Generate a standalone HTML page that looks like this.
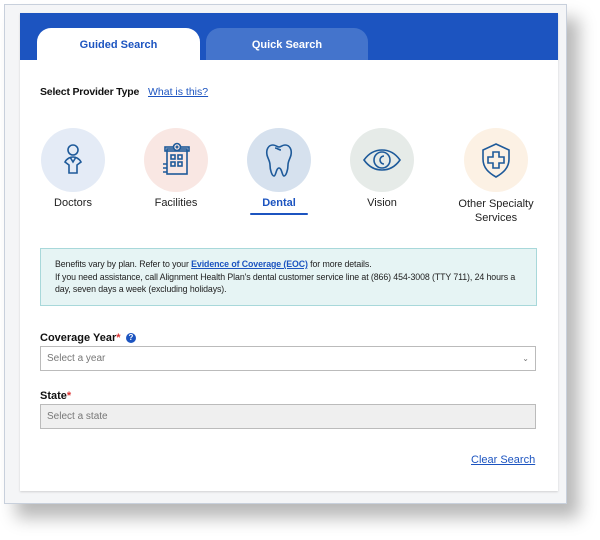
<!DOCTYPE html>
<html><head><style>
*{box-sizing:border-box;margin:0;padding:0}
body{width:600px;height:540px;background:#fff;font-family:"Liberation Sans",Arial,sans-serif;position:relative;overflow:hidden}
.frame{position:absolute;left:4px;top:4px;width:563px;height:500px;background:#f4f5f7;border:1px solid #c8d0dc;box-shadow:12px 14px 16px rgba(0,0,0,0.28)}
.card{position:absolute;left:20px;top:13px;width:538px;height:478px;background:#fff;box-shadow:0 1px 2px rgba(0,0,0,.15)}
.head{position:absolute;left:0;top:0;width:538px;height:47px;background:#1c54c0}
.tab{position:absolute;top:15px;height:32px;border-radius:14px 14px 0 0;font-weight:bold;font-size:11px;text-align:center;line-height:34px}
.t1{left:17px;width:163px;background:#fff;color:#1c54c0}
.t2{left:186px;width:162px;background:#4474cc;color:#fff}
.lab{position:absolute;font-size:11px;color:#222;text-align:center}
.ic{position:absolute;width:64px;height:64px;border-radius:50%}
.ic svg{position:absolute;left:12px;top:12px;width:40px;height:40px}
.abs{position:absolute}
</style></head><body>
<div class="frame"></div>
<div class="card">
<div class="head"></div>
<div class="tab t1">Guided Search</div>
<div class="tab t2">Quick Search</div>
<div class="abs" style="left:20px;top:73px;font-size:10.5px;font-weight:bold;color:#111;letter-spacing:-0.2px">Select Provider Type</div>
<div class="abs" style="left:128px;top:73px;font-size:10.5px;color:#1c54c0;text-decoration:underline">What is this?</div>

<div class="ic" style="left:21px;top:115px;background:#e4ebf6"><svg viewBox="0 0 40 40" fill="none" stroke="#1e5a9a" stroke-width="1.6"><circle cx="20" cy="10" r="5"/><path d="M12 22c2-4 6-5 8-5s6 1 8 5l-4 3v8h-8v-8z"/><path d="M17 17l3 5 3-5"/></svg></div>
<div class="ic" style="left:124px;top:115px;background:#f9e7e3"><svg viewBox="0 0 40 40" fill="none" stroke="#1e5a9a" stroke-width="1.6"><rect x="11" y="9" width="20" height="25"/><rect x="9" y="7" width="24" height="4"/><circle cx="21" cy="7" r="3.5" fill="#f9e7e3"/><path d="M21 5.5v3M19.5 7h3"/><rect x="15" y="15" width="4" height="4"/><rect x="22" y="15" width="4" height="4"/><rect x="15" y="22" width="4" height="4"/><rect x="22" y="22" width="4" height="4"/><path d="M7 24h4M7 28h4M7 32h4"/></svg></div>
<div class="ic" style="left:227px;top:115px;background:#d6e1ee"><svg viewBox="0 0 40 40" fill="none" stroke="#1e5a9a" stroke-width="1.6"><path d="M14 5c-5 0-7 5-6 10 1 4 3 6 3 10 0 5 2 11 4 11s2-8 5-8 3 8 5 8 4-6 4-11c0-4 2-6 3-10 1-5-1-10-6-10-3 0-4 2-6 2s-3-2-6-2z"/><path d="M16 8c2 0 4 2 6 2"/></svg></div>
<div class="ic" style="left:330px;top:115px;background:#e6ebe8"><svg viewBox="0 0 40 40" fill="none" stroke="#1e5a9a" stroke-width="1.6"><path d="M2 20c5-7 11-10 18-10s13 3 18 10c-5 7-11 10-18 10S7 27 2 20z"/><circle cx="20" cy="20" r="8"/><path d="M22 16a4 4 0 1 0 0 8"/></svg></div>
<div class="ic" style="left:444px;top:115px;background:#fcf1e4"><svg viewBox="0 0 40 40" fill="none" stroke="#1e5a9a" stroke-width="1.6"><path d="M20 4l13 6v9c0 9-6 14-13 18C13 33 7 28 7 19v-9z"/><path d="M17 12h6v5h5v6h-5v5h-6v-5h-5v-6h5z"/></svg></div>

<div class="lab" style="left:13px;top:184px;width:80px">Doctors</div>
<div class="lab" style="left:116px;top:184px;width:80px">Facilities</div>
<div class="lab" style="left:219px;top:184px;width:80px;color:#1c54c0;font-weight:bold">Dental</div>
<div class="abs" style="left:230px;top:200px;width:58px;height:2px;background:#1c54c0;border-radius:2px"></div>
<div class="lab" style="left:322px;top:184px;width:80px">Vision</div>
<div class="lab" style="left:426px;top:184px;width:100px;line-height:14px">Other Specialty<br>Services</div>

<div class="abs" style="left:20px;top:235px;width:497px;height:58px;background:#e6f4f4;border:1px solid #a8d8da;padding:9px 14px;font-size:8.8px;line-height:12.5px;color:#222;letter-spacing:-0.1px">Benefits vary by plan. Refer to your <b style="color:#1c54c0;text-decoration:underline">Evidence of Coverage (EOC)</b> for more details.<br>If you need assistance, call Alignment Health Plan's dental customer service line at (866) 454-3008 (TTY 711), 24 hours a day, seven days a week (excluding holidays).</div>

<div class="abs" style="left:20px;top:319px;font-size:11px;font-weight:bold;color:#111">Coverage Year<span style="color:#d33">*</span></div>
<div class="abs" style="left:106px;top:320px;width:10px;height:10px;border-radius:50%;background:#1c54c0;color:#fff;font-size:8px;font-weight:bold;text-align:center;line-height:10px">?</div>
<div class="abs" style="left:20px;top:333px;width:496px;height:25px;border:1px solid #bbb;background:#fff;font-size:10px;color:#777;padding-left:6px;line-height:23px">Select a year<span style="position:absolute;right:6px;font-size:8px">⌄</span></div>
<div class="abs" style="left:20px;top:377px;font-size:11px;font-weight:bold;color:#111">State<span style="color:#d33">*</span></div>
<div class="abs" style="left:20px;top:391px;width:496px;height:25px;border:1px solid #bbb;background:#efefef;font-size:10px;color:#777;padding-left:6px;line-height:23px">Select a state</div>
<div class="abs" style="left:451px;top:441px;font-size:11px;color:#1c54c0;text-decoration:underline">Clear Search</div>
</div>
</body></html>
